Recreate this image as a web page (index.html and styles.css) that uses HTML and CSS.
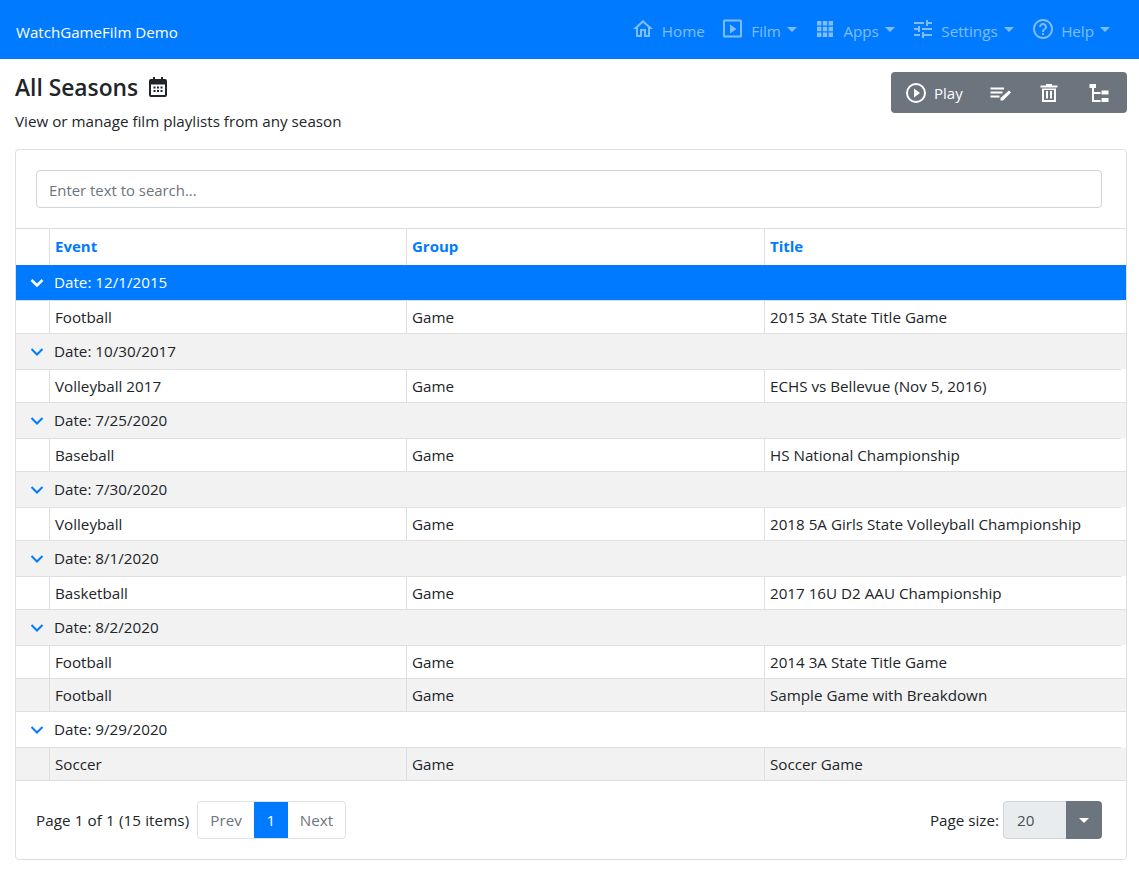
FILE: index.html
```html
<!DOCTYPE html>
<html lang="en">
<head>
<meta charset="utf-8">
<title>WatchGameFilm Demo</title>
<link rel="stylesheet" href="styles.css">
</head>
<body>
<header class="navbar">
  <a class="brand">WatchGameFilm Demo</a>
  <nav class="nav">
    <a class="nav-item"><svg class="ni" viewBox="0 0 24 24"><path d="M12 5.700l5 4.500V18h-2v-6H9v6H7v-7.800l5-4.500M12 3L2 12h3v8h6v-6h2v6h6v-8h3L12 3z"/></svg><span>Home</span></a>
    <a class="nav-item"><svg class="ni" viewBox="0 0 24 24"><path fill-rule="evenodd" d="M3.500 2.500h16a1.500 1.500 0 0 1 1.500 1.500v15a1.500 1.500 0 0 1-1.500 1.500h-16A1.500 1.500 0 0 1 2 19V4a1.500 1.500 0 0 1 1.500-1.500zM4 4.500v14h15v-14H4zM9 7.500l6.500 4.500-6.500 4.500z"/></svg><span>Film</span><i class="caret"></i></a>
    <a class="nav-item"><svg class="ni" viewBox="0 0 24 24"><path d="M4 4h4.400v4.400H4zM9.800 4h4.400v4.400H9.800zM15.600 4H20v4.400h-4.400zM4 9.800h4.400v4.400H4zM9.800 9.800h4.400v4.400H9.800zM15.600 9.800H20v4.400h-4.400zM4 15.600h4.400V20H4zM9.800 15.600h4.400V20H9.800zM15.600 15.600H20V20h-4.400z"/></svg><span>Apps</span><i class="caret"></i></a>
    <a class="nav-item nav-settings"><svg class="ni" viewBox="0 0 24 24"><path d="M3 17v2h6v-2H3zM3 5v2h10V5H3zm10 16v-2h8v-2h-8v-2h-2v6h2zM7 9v2H3v2h4v2h2V9H7zm14 4v-2H11v2h10zm-6-4h2V7h4V5h-4V3h-2v6z"/></svg><span>Settings</span><i class="caret"></i></a>
    <a class="nav-item"><svg class="ni" viewBox="0 0 24 24"><path d="M11 18h2v-2h-2v2zm1-16C6.480 2 2 6.480 2 12s4.480 10 10 10 10-4.480 10-10S17.520 2 12 2zm0 18c-4.410 0-8-3.590-8-8s3.590-8 8-8 8 3.590 8 8-3.590 8-8 8zm0-14c-2.210 0-4 1.790-4 4h2c0-1.100.9-2 2-2s2 .9 2 2c0 2-3 1.750-3 5h2c0-2.250 3-2.500 3-5 0-2.210-1.790-4-4-4z"/></svg><span>Help</span><i class="caret"></i></a>
  </nav>
</header>
<main class="page">
  <div class="page-head">
    <div>
      <h1 class="title">All Seasons <svg class="cal" viewBox="0 0 24 24"><path fill-rule="evenodd" d="M7 2h2v2h6V2h2v2h2a2 2 0 0 1 2 2v14a2 2 0 0 1-2 2H5a2 2 0 0 1-2-2V6a2 2 0 0 1 2-2h2V2zM5 9.500V20h14V9.500H5zM7.500 11.500h2v2h-2zM11 11.500h2v2h-2zM14.500 11.500h2v2h-2zM7.500 15h2v2h-2zM11 15h2v2h-2zM14.500 15h2v2h-2z"/></svg></h1>
      <p class="sub">View or manage film playlists from any season</p>
    </div>
    <div class="toolbar">
      <a class="tool tool-play"><svg class="ti" viewBox="0 0 24 24"><path fill-rule="evenodd" d="M12 2a10 10 0 1 0 0 20 10 10 0 0 0 0-20zm0 18a8 8 0 1 1 0-16 8 8 0 0 1 0 16zM10 7.500v9l6-4.500-6-4.500z"/></svg><span>Play</span></a>
      <a class="tool"><svg class="ti" viewBox="0 0 24 24"><path d="M1.500 6.500h13.500v2H1.500zM1.500 10.500h12v2h-12zM1.500 14.500h9v2h-9zM20 9.500l2 2-8 8h-2.500V17z"/></svg></a>
      <a class="tool"><svg class="ti" viewBox="1 0 24 24"><path fill-rule="evenodd" d="M9 3h6v1.500h5.500v2h-17v-2H9zM5 7.500h14V21H5zM7 9v10h10V9zM9 10h2v7.500H9zM13 10h2v7.500h-2z"/></svg></a>
      <a class="tool"><svg class="ti" viewBox="0 0 24 24"><path d="M2.500 3H9v4H7v4h6.500v2H7v6h6.500v2H5V7H2.500zM14.500 9.500h7v4h-7zM14.500 17h7v4h-7z"/></svg></a>
    </div>
  </div>

  <section class="card">
    <div class="search"><input class="search-input" type="text" placeholder="Enter text to search..."></div>
    <div class="grid">
      <div class="row head"><div class="indent"></div><div class="cell">Event</div><div class="cell">Group</div><div class="cell">Title</div></div>

      <div class="group selected"><svg class="chev" viewBox="0 0 16 16"><path d="M2.500 5L8 10.500 13.500 5"/></svg>Date: 12/1/2015</div>
      <div class="row"><div class="indent"></div><div class="cell">Football</div><div class="cell">Game</div><div class="cell">2015 3A State Title Game</div></div>

      <div class="group alt"><svg class="chev" viewBox="0 0 16 16"><path d="M2.500 5L8 10.500 13.500 5"/></svg>Date: 10/30/2017</div>
      <div class="row"><div class="indent"></div><div class="cell">Volleyball 2017</div><div class="cell">Game</div><div class="cell">ECHS vs Bellevue (Nov 5, 2016)</div></div>

      <div class="group alt"><svg class="chev" viewBox="0 0 16 16"><path d="M2.500 5L8 10.500 13.500 5"/></svg>Date: 7/25/2020</div>
      <div class="row"><div class="indent"></div><div class="cell">Baseball</div><div class="cell">Game</div><div class="cell">HS National Championship</div></div>

      <div class="group alt"><svg class="chev" viewBox="0 0 16 16"><path d="M2.500 5L8 10.500 13.500 5"/></svg>Date: 7/30/2020</div>
      <div class="row"><div class="indent"></div><div class="cell">Volleyball</div><div class="cell">Game</div><div class="cell">2018 5A Girls State Volleyball Championship</div></div>

      <div class="group alt"><svg class="chev" viewBox="0 0 16 16"><path d="M2.500 5L8 10.500 13.500 5"/></svg>Date: 8/1/2020</div>
      <div class="row"><div class="indent"></div><div class="cell">Basketball</div><div class="cell">Game</div><div class="cell">2017 16U D2 AAU Championship</div></div>

      <div class="group alt"><svg class="chev" viewBox="0 0 16 16"><path d="M2.500 5L8 10.500 13.500 5"/></svg>Date: 8/2/2020</div>
      <div class="row"><div class="indent"></div><div class="cell">Football</div><div class="cell">Game</div><div class="cell">2014 3A State Title Game</div></div>
      <div class="row alt"><div class="indent"></div><div class="cell">Football</div><div class="cell">Game</div><div class="cell">Sample Game with Breakdown</div></div>

      <div class="group"><svg class="chev" viewBox="0 0 16 16"><path d="M2.500 5L8 10.500 13.500 5"/></svg>Date: 9/29/2020</div>
      <div class="row alt last"><div class="indent"></div><div class="cell">Soccer</div><div class="cell">Game</div><div class="cell">Soccer Game</div></div>
    </div>
    <div class="pager">
      <div class="pager-left">
        <span class="pager-info">Page 1 of 1 (15 items)</span>
        <div class="pages"><a class="pg">Prev</a><a class="pg active">1</a><a class="pg">Next</a></div>
      </div>
      <div class="pager-right">
        <span>Page size:</span>
        <div class="size"><span class="size-val">20</span><span class="size-btn"><i class="caret"></i></span></div>
      </div>
    </div>
  </section>
</main>
</body>
</html>
```

FILE: styles.css
```css
* { box-sizing: border-box; }
html, body { margin: 0; padding: 0; }
body {
  font-family: "Open Sans", "Noto Sans", "Liberation Sans", sans-serif;
  font-size: 15.2px;
  line-height: 1.5;
  color: #212529;
  background: #fff;
}
.navbar {
  height: 59px;
  background: #007bff;
  display: flex;
  align-items: center;
  justify-content: space-between;
  padding: 0 16px;
}
.brand { color: #fff; font-size: 15.1px; padding-top: 5px; }
.nav { display: flex; align-items: center; gap: 16px; margin-right: 13px; }
.nav-item { display: flex; align-items: center; color: rgba(255,255,255,.5); font-size: 15.2px; }
.nav-item span { padding-top: 3px; }
.nav-settings { margin-right: 1px; }
.ni { width: 24px; height: 24px; fill: currentColor; margin-right: 6.5px; }
.caret {
  display: inline-block;
  width: 0; height: 0;
  margin-left: 6px;
  border-top: 5px solid currentColor;
  border-left: 5px solid transparent;
  border-right: 5px solid transparent;
}
.page { padding: 13px 12px 0 15px; }
.page-head { display: flex; justify-content: space-between; align-items: flex-start; height: 77px; }
.title { margin: 1px 0 0; font-size: 22.8px; font-weight: 600; line-height: 30px; display: flex; align-items: center; gap: 2px; }
.cal { width: 24px; height: 24px; fill: #212529; margin: -2px 0 0 6px; }
.sub { margin: 7px 0 0; line-height: 22px; }
.toolbar {
  width: 236px; height: 41px;
  background: #6c757d;
  border-radius: 4px;
  display: flex;
  align-items: center;
  padding-left: 13px;
  color: #fff;
}
.tool { display: flex; align-items: center; color: #fff; }
.tool-play { width: 72px; }
.tool + .tool { width: 49px; justify-content: center; }
.tool-play span { margin-left: 6px; font-size: 15px; padding-top: 2px; }
.ti { width: 24px; height: 24px; fill: #fff; }
.card {
  border: 1px solid #dfdfdf;
  border-radius: 4px;
  height: 711px;
  display: flex;
  flex-direction: column;
}
.search { padding: 20px 24px 20px 20px; }
.search-input {
  display: block;
  width: 100%;
  height: 38px;
  border: 1px solid #ced4da;
  border-radius: 4px;
  padding: 1px 12px 0;
  font: inherit;
  font-size: 14.9px;
  color: #495057;
}
.search-input::placeholder { color: #6c757d; opacity: 1; }
.grid { border-top: 1px solid #dfdfdf; }
.row {
  display: grid;
  grid-template-columns: 34px 357px 358px 1fr;
  height: 33px;
  border-bottom: 1px solid #dfdfdf;
}
.row.head { height: 36px; font-size: 15px; font-weight: 700; color: #007bff; border-bottom: 0; }
.row.alt { background: #f2f2f2; }
.indent, .cell { border-right: 1px solid #dfdfdf; }
.cell { padding: 0 5px; display: flex; align-items: center; white-space: nowrap; }
.head .cell { padding-bottom: 2px; }
.cell:last-child { border-right: 0; }
.group {
  display: flex;
  align-items: center;
  height: 36px;
  padding: 0 0 1px 13px;
  border-top: 1px solid #dfdfdf;
  background-image: linear-gradient(#dfdfdf, #dfdfdf), linear-gradient(#fff, #fff);
  background-size: calc(100% - 5px) 1px, 5px 1px;
  background-position: left bottom, right bottom;
  background-repeat: no-repeat;
}
.row + .group { border-top: 0; }
.group.alt { background-color: #f2f2f2; }
.group.selected { background-color: #007bff; color: #fff; }
.chev { width: 16px; height: 16px; fill: none; stroke: #007bff; stroke-width: 2; margin-right: 9px; }
.selected .chev { stroke: #fff; stroke-width: 2.500; }
.pager {
  flex: 1;
  display: flex;
  align-items: center;
  justify-content: space-between;
  padding: 0 24px 0 20px;
}
.pager-left, .pager-right { display: flex; align-items: center; }
.pager-left { gap: 8px; }
.pager-info { letter-spacing: .1px; }
.pager-right { gap: 4px; }
.pages { display: flex; height: 38px; border: 1px solid #dee2e6; border-radius: 4px; overflow: hidden; }
.pg { display: flex; align-items: center; padding: 0 12px; color: #6c757d; }
.pg.active { background: #007bff; color: #fff; width: 34px; justify-content: center; padding: 0; }
.size { display: flex; height: 38px; width: 99px; border-radius: 4px; overflow: hidden; }
.size-val { flex: 1; background: #e9ecef; border: 1px solid #ced4da; border-right: 0; border-radius: 4px 0 0 4px; padding: 1px 0 0 13px; display: flex; align-items: center; color: #495057; }
.size-btn { width: 36px; background: #6c757d; color: #fff; display: flex; align-items: center; justify-content: center; }
.size-btn .caret { margin: 0; }
```
